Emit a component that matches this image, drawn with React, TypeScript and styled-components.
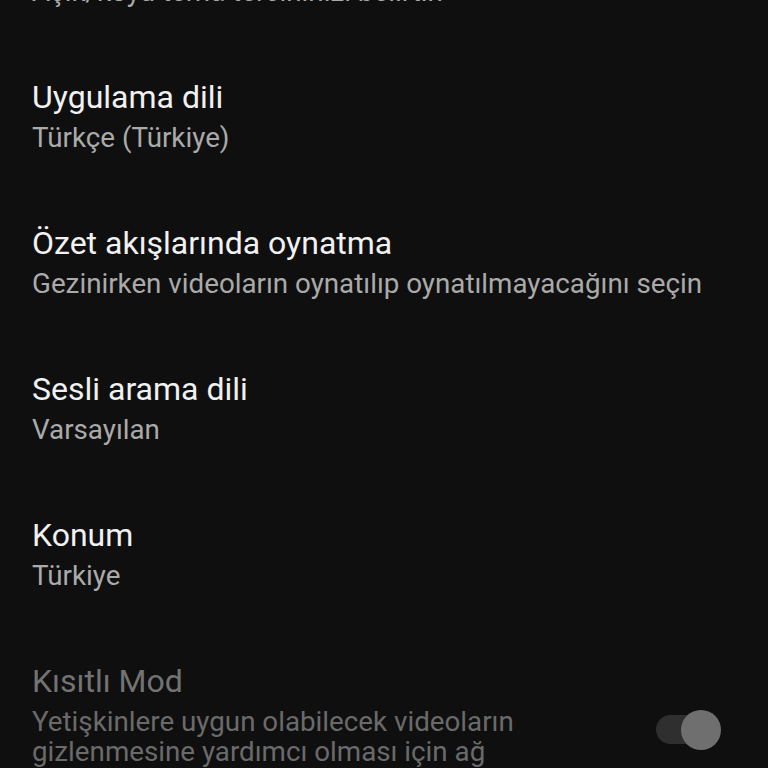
import React from "react";
import styled, { createGlobalStyle } from "styled-components";

const Global = createGlobalStyle`
  html, body {
    margin: 0;
    padding: 0;
    background: #0f0f0f;
  }
  body {
    font-family: Roboto, "Noto Sans", "Liberation Sans", sans-serif;
    -webkit-font-smoothing: antialiased;
  }
`;

const Viewport = styled.div`
  height: 768px;
  overflow: hidden;
  background: #0f0f0f;
`;

const List = styled.div`
  display: flex;
  flex-direction: column;
  margin-top: -104px;
`;

const Row = styled.div`
  display: flex;
  align-items: center;
  gap: 24px;
  padding: 36px 47px 35px 32px;
`;

const TextCol = styled.div<{ $narrow?: boolean }>`
  display: flex;
  flex-direction: column;
  flex: 1;
  min-width: 0;
  max-width: ${(p) => (p.$narrow ? "520px" : "none")};
`;

const Title = styled.div<{ $disabled?: boolean }>`
  font-size: 32px;
  line-height: 38px;
  color: ${(p) => (p.$disabled ? "#737373" : "#f1f1f1")};
  white-space: nowrap;
`;

const Subtitle = styled.div<{ $disabled?: boolean }>`
  margin-top: 7px;
  font-size: 27.75px;
  line-height: 30px;
  color: ${(p) => (p.$disabled ? "#6a6a6a" : "#aaaaaa")};
`;

const Switch = styled.div`
  position: relative;
  flex: none;
  width: 65px;
  height: 40px;
  margin-left: auto;
  display: flex;
  align-items: center;
`;

const Track = styled.div`
  width: 56px;
  height: 29px;
  border-radius: 15px;
  background: #2f2f2f;
`;

const Thumb = styled.div`
  position: absolute;
  right: 0;
  top: 0;
  width: 40px;
  height: 40px;
  border-radius: 50%;
  background: #6f6f6f;
`;

type Item = { title: string; sub: string; disabled?: boolean; toggle?: boolean };

const items: Item[] = [
  { title: "Görünüm", sub: "Açık/koyu tema tercihinizi belirtin" },
  { title: "Uygulama dili", sub: "Türkçe (Türkiye)" },
  { title: "Özet akışlarında oynatma", sub: "Gezinirken videoların oynatılıp oynatılmayacağını seçin" },
  { title: "Sesli arama dili", sub: "Varsayılan" },
  { title: "Konum", sub: "Türkiye" },
  {
    title: "Kısıtlı Mod",
    sub: "Yetişkinlere uygun olabilecek videoların gizlenmesine yardımcı olması için ağ yöneticiniz tarafından açıldı",
    disabled: true,
    toggle: true,
  },
];

export default function App() {
  return (
    <>
      <Global />
      <Viewport>
        <List>
          {items.map((it) => (
            <Row key={it.title}>
              <TextCol $narrow={it.toggle}>
                <Title $disabled={it.disabled}>{it.title}</Title>
                <Subtitle $disabled={it.disabled}>{it.sub}</Subtitle>
              </TextCol>
              {it.toggle && (
                <Switch>
                  <Track />
                  <Thumb />
                </Switch>
              )}
            </Row>
          ))}
        </List>
      </Viewport>
    </>
  );
}
